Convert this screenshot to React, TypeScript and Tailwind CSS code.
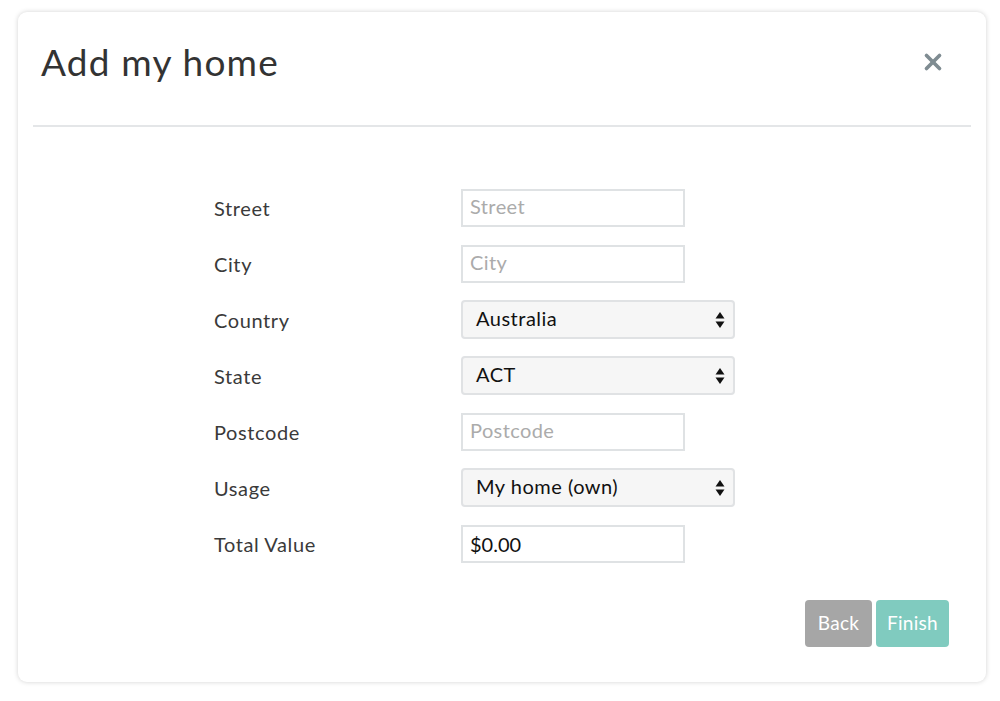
import { X } from "lucide-react";

type Field =
  | { label: string; kind: "input"; placeholder?: string; value?: string }
  | { label: string; kind: "select"; value: string };

const fields: Field[] = [
  { label: "Street", kind: "input", placeholder: "Street" },
  { label: "City", kind: "input", placeholder: "City" },
  { label: "Country", kind: "select", value: "Australia" },
  { label: "State", kind: "select", value: "ACT" },
  { label: "Postcode", kind: "input", placeholder: "Postcode" },
  { label: "Usage", kind: "select", value: "My home (own)" },
  { label: "Total Value", kind: "input", value: "$0.00" },
];

function Arrows() {
  return (
    <svg width="10" height="18" viewBox="0 0 10 18" className="shrink-0">
      <path d="M5 1 L9.5 7.5 H0.5 Z" fill="#111" />
      <path d="M5 17 L9.5 10.5 H0.5 Z" fill="#111" />
    </svg>
  );
}

export default function App() {
  return (
    <div
      className="w-[1000px] h-[701px] bg-white pt-[12px] pl-[18px]"
      style={{ fontFamily: "Lato, 'Open Sans', sans-serif" }}
    >
      <div className="w-[968px] h-[670px] rounded-[9px] bg-white shadow-[0_0_5px_rgba(0,0,0,0.18)] flex flex-col">
        <div className="flex items-center justify-between h-[113px] pl-[23px] pr-[40px] pb-[14px]">
          <h1 className="text-[37px] text-[#333] tracking-[1.2px]">Add my home</h1>
          <X className="w-[26px] h-[26px] text-[#7f8c92]" strokeWidth={3.4} />
        </div>
        <div className="mx-[15px] h-[2px] bg-[#e4e6e8]" />

        <div className="flex flex-col pl-[196px] pt-[61px] gap-[17px]">
          {fields.map((f) => (
            <div key={f.label} className="flex items-center h-[39px]">
              <div className="w-[247px] text-[20px] text-[#3a3a3a] tracking-[0.6px]">{f.label}</div>
              {f.kind === "input" ? (
                <div className="w-[224px] h-[38px] border-2 border-[#dfe2e4] flex items-center px-[7px] text-[20px]">
                  {f.value ? (
                    <span className="text-[#111]">{f.value}</span>
                  ) : (
                    <span className="text-[#ababab] -mt-[4px] tracking-[0.4px]">{f.placeholder}</span>
                  )}
                </div>
              ) : (
                <div className="w-[274px] h-[39px] border-2 border-[#e0e2e4] rounded-[4px] bg-[#f6f6f6] flex items-center justify-between pl-[13px] pr-[8px] text-[20px] text-[#111]">
                  <span className="-mt-[4px] tracking-[0.5px]">{f.value}</span>
                  <Arrows />
                </div>
              )}
            </div>
          ))}
        </div>

        <div className="flex justify-end gap-[4px] pr-[37px] mt-[37px]">
          <button className="w-[67px] h-[47px] rounded-[4px] bg-[#a6a6a6] text-white text-[19px] tracking-[0.3px]">Back</button>
          <button className="w-[73px] h-[47px] rounded-[4px] bg-[#80cbbf] text-white text-[19px] tracking-[0.3px]">Finish</button>
        </div>
      </div>
    </div>
  );
}
